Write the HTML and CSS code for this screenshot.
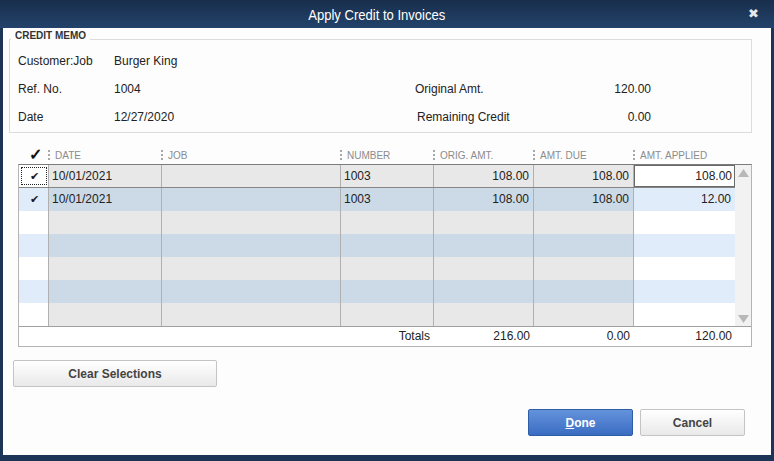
FILE: index.html
```html
<!DOCTYPE html>
<html lang="en">
<head>
    <meta charset="UTF-8">
    <title>Apply Credit to Invoices</title>
    <link rel="stylesheet" href="styles.css">
</head>
<body>
    <div class="window">
        <div class="titlebar">
            <div class="title"><span class="title-text">Apply Credit to Invoices</span></div>
            <span class="close">&#10006;</span>
        </div>
        <div class="content">
            <div class="memo">
                <span class="memo-title">CREDIT MEMO</span>
                <div class="memo-grid">
                    <span>Customer:Job</span><span>Burger King</span><span></span><span></span>
                    <span>Ref. No.</span><span>1004</span><span>Original Amt.</span><span class="amt">120.00</span>
                    <span>Date</span><span>12/27/2020</span><span class="shift">Remaining Credit</span><span class="amt">0.00</span>
                </div>
            </div>

            <div class="grid-head">
                <div class="hcheck">&#10003;</div>
                <div class="hcell">DATE</div>
                <div class="hcell">JOB</div>
                <div class="hcell">NUMBER</div>
                <div class="hcell">ORIG. AMT.</div>
                <div class="hcell">AMT. DUE</div>
                <div class="hcell">AMT. APPLIED</div>
            </div>

            <div class="grid">
                <div class="grid-body">
                    <div class="rows">
                        <div class="row odd current">
                            <div class="c check focus">&#10004;</div>
                            <div class="c">10/01/2021</div>
                            <div class="c"></div>
                            <div class="c">1003</div>
                            <div class="c num">108.00</div>
                            <div class="c num">108.00</div>
                            <div class="c num edit">108.00</div>
                        </div>
                        <div class="row even">
                            <div class="c check">&#10004;</div>
                            <div class="c">10/01/2021</div>
                            <div class="c"></div>
                            <div class="c">1003</div>
                            <div class="c num">108.00</div>
                            <div class="c num">108.00</div>
                            <div class="c num">12.00</div>
                        </div>
                        <div class="row odd"><div class="c check"></div><div class="c"></div><div class="c"></div><div class="c"></div><div class="c"></div><div class="c"></div><div class="c"></div></div>
                        <div class="row even"><div class="c check"></div><div class="c"></div><div class="c"></div><div class="c"></div><div class="c"></div><div class="c"></div><div class="c"></div></div>
                        <div class="row odd"><div class="c check"></div><div class="c"></div><div class="c"></div><div class="c"></div><div class="c"></div><div class="c"></div><div class="c"></div></div>
                        <div class="row even"><div class="c check"></div><div class="c"></div><div class="c"></div><div class="c"></div><div class="c"></div><div class="c"></div><div class="c"></div></div>
                        <div class="row odd"><div class="c check"></div><div class="c"></div><div class="c"></div><div class="c"></div><div class="c"></div><div class="c"></div><div class="c"></div></div>
                    </div>
                    <div class="scrollbar">
                        <svg width="11" height="8" viewBox="0 0 11 8"><polygon points="5.5,0 11,8 0,8" fill="#b8b8b8"/></svg>
                        <svg width="11" height="8" viewBox="0 0 11 8"><polygon points="0,0 11,0 5.5,8" fill="#b8b8b8"/></svg>
                    </div>
                </div>
                <div class="totals">
                    <span></span><span></span><span></span>
                    <span class="num">Totals</span>
                    <span class="num">216.00</span>
                    <span class="num">0.00</span>
                    <span class="num">120.00</span>
                </div>
            </div>

            <button class="btn clear-btn">Clear Selections</button>

            <div class="actions">
                <button class="btn primary"><u>D</u>one</button>
                <button class="btn">Cancel</button>
            </div>
        </div>
    </div>
</body>
</html>
```

FILE: styles.css
```css
body {
    margin: 0;
    background-color: #1c3556;
    font-family: "Liberation Sans", Arial, sans-serif;
    font-size: 12px;
    color: #222;
}

.window {
    width: 774px;
    height: 461px;
    display: flex;
    flex-direction: column;
    background-color: #1c3556;
}

.titlebar {
    height: 28px;
    display: flex;
    align-items: center;
    background: linear-gradient(#182e4c, #23436b);
    color: white;
    position: relative;
}

.title {
    flex: 1;
    text-align: center;
    padding-right: 20px;
    padding-top: 1px;
}

.title-text {
    display: inline-block;
    font-size: 15px;
    transform: scaleX(0.87);
}

.close {
    position: absolute;
    right: 15px;
    top: 6px;
    font-size: 13px;
    color: #e4e8ee;
}

.content {
    flex: 1;
    margin: 0 3px 6px 3px;
    padding: 11px 19px 0 6px;
    background-color: #fdfdfd;
}

/* credit memo box */
.memo {
    position: relative;
    border: 1px solid #dcdcdc;
    padding: 7px 0 1px 8px;
}

.memo-title {
    position: absolute;
    left: 1px;
    top: -10px;
    padding: 0 4px;
    background-color: #fdfdfd;
    font-size: 10px;
    font-weight: bold;
    line-height: 12px;
    color: #333;
}

.memo-grid {
    display: grid;
    grid-template-columns: 96px 301px 150px 86px;
    grid-auto-rows: 28px;
    align-items: center;
}

.memo-grid .amt {
    text-align: right;
}

.memo-grid .shift {
    padding-left: 2px;
}

/* grid columns: check, date, job, number, orig, due, applied */
.grid-head {
    display: grid;
    grid-template-columns: 30px 113px 179px 93px 100px 100px 101px;
    align-items: center;
    height: 18px;
    margin: 13px 0 0 10px;
}

.hcheck {
    text-align: center;
    padding-left: 3px;
    font-size: 16px;
    font-weight: bold;
    color: #111;
    line-height: 14px;
}

.hcell {
    border-left: 2px dotted #a8a8a8;
    margin-left: -1px;
    padding-left: 5px;
    height: 10px;
    line-height: 11px;
    font-size: 10px;
    color: #8c8c8c;
}

.grid {
    margin-left: 9px;
    width: 732px;
    border: 1px solid #b4b4b4;
    border-top-color: #7c7c7c;
}

.grid-body {
    display: flex;
}

.rows {
    width: 716px;
}

.row {
    display: grid;
    grid-template-columns: 30px 113px 179px 93px 100px 100px 101px;
    height: 23px;
}

.c {
    border-right: 1px solid #b0b0b0;
    padding: 0 3px;
    line-height: 23px;
    white-space: nowrap;
}

.c:last-child {
    border-right: none;
}

.c.num {
    text-align: right;
    padding-right: 4px;
}

.c.check {
    text-align: center;
    font-size: 11px;
    padding: 0 0 0 2px;
    color: #1a1a1a;
}

.row.odd .c {
    background-color: #e8e8e8;
}

.row.even .c {
    background-color: #ccd9e6;
}

.row.odd .c.check,
.row.odd .c:last-child {
    background-color: #ffffff;
}

.row.even .c.check,
.row.even .c:last-child {
    background-color: #e1ecfa;
}

.row.current {
    height: 23px;
    border-bottom: 1px solid #858585;
    box-sizing: border-box;
}

.row.current .c {
    line-height: 22px;
}

.c.focus {
    outline: 1px dotted #222;
    outline-offset: -3px;
}

.c.edit {
    box-shadow: inset 0 0 0 1px #6a6a6a;
    padding-right: 3px;
}

.scrollbar {
    width: 16px;
    background-color: #f2f2f2;
    display: flex;
    flex-direction: column;
    justify-content: space-between;
    align-items: center;
    padding: 4px 0 3px;
    box-sizing: border-box;
}

.totals {
    display: grid;
    grid-template-columns: 30px 113px 179px 93px 100px 100px 101px;
    height: 19px;
    line-height: 19px;
    border-top: 1px solid #a0a0a0;
    background-color: #fff;
}

.totals .num {
    text-align: right;
    padding-right: 4px;
}

.totals .num:last-child {
    padding-right: 3px;
}

/* buttons */
.btn {
    height: 27px;
    border: 1px solid #c4c4c4;
    border-radius: 2px;
    background: linear-gradient(#ffffff, #e9e9e9);
    font-family: "Liberation Sans", Arial, sans-serif;
    font-size: 12px;
    font-weight: bold;
    color: #444;
    padding: 0;
}

.clear-btn {
    display: block;
    width: 204px;
    margin: 13px 0 0 4px;
}

.actions {
    display: flex;
    justify-content: flex-end;
    gap: 7px;
    margin: 22px 7px 0 0;
}

.actions .btn {
    width: 105px;
}

.btn.primary {
    background: linear-gradient(#6493dc, #3a6cc2);
    border-color: #2f5ca6;
    color: white;
}
```
